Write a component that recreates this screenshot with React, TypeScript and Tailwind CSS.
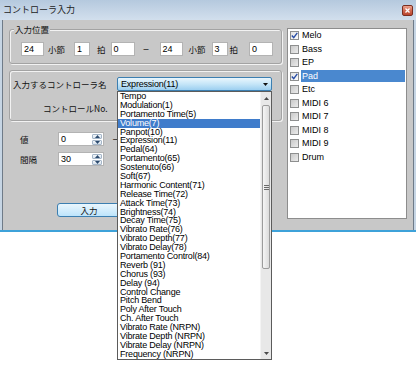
import React from "react";

const cjk = "font-['Noto_Sans_CJK_JP',sans-serif]";
const latin = "font-['Liberation_Sans',Arial,sans-serif]";

const controllers = [
  "Tempo",
  "Modulation(1)",
  "Portamento Time(5)",
  "Volume(7)",
  "Panpot(10)",
  "Expression(11)",
  "Pedal(64)",
  "Portamento(65)",
  "Sostenuto(66)",
  "Soft(67)",
  "Harmonic Content(71)",
  "Release Time(72)",
  "Attack Time(73)",
  "Brightness(74)",
  "Decay Time(75)",
  "Vibrato Rate(76)",
  "Vibrato Depth(77)",
  "Vibrato Delay(78)",
  "Portamento Control(84)",
  "Reverb (91)",
  "Chorus (93)",
  "Delay (94)",
  "Control Change",
  "Pitch Bend",
  "Poly After Touch",
  "Ch. After Touch",
  "Vibrato Rate (NRPN)",
  "Vibrate Depth (NRPN)",
  "Vibrate Delay (NRPN)",
  "Frequency (NRPN)",
];

const tracks = [
  { name: "Melo", checked: true },
  { name: "Bass", checked: false },
  { name: "EP", checked: false },
  { name: "Pad", checked: true, selected: true },
  { name: "Etc", checked: false },
  { name: "MIDI 6", checked: false },
  { name: "MIDI 7", checked: false },
  { name: "MIDI 8", checked: false },
  { name: "MIDI 9", checked: false },
  { name: "Drum", checked: false },
];

function NumBox({ value, width, className = "" }: { value: string; width: string; className?: string }) {
  return (
    <div
      className={`${width} ${className} h-[14px] shrink-0 border border-[#b3b3b3] bg-white pl-[2px] text-[9px] leading-[12px] text-black ${latin}`}
    >
      {value}
    </div>
  );
}

function Label({ text, className = "" }: { text: string; className?: string }) {
  return <span className={`${cjk} ${className} shrink-0 text-[8.5px] leading-[10px] text-[#111]`}>{text}</span>;
}

function Tri({ up, color = "#3a3a3a" }: { up?: boolean; color?: string }) {
  return (
    <svg width="5" height="3" viewBox="0 0 5 3">
      <path d={up ? "M2.5 0 L5 3 L0 3 Z" : "M0 0 L5 0 L2.5 3 Z"} fill={color} />
    </svg>
  );
}

function Spin({ value }: { value: string }) {
  return (
    <div className="flex h-[14px] w-[46px] shrink-0 border border-[#b3b3b3] bg-white">
      <div className={`flex-1 pl-[2px] text-[9px] leading-[12px] text-black ${latin}`}>{value}</div>
      <div className="flex w-[12px] flex-col gap-px p-px">
        <div className="flex flex-1 items-center justify-center rounded-[1px] border border-[#a5b6c8] bg-linear-to-b from-[#f4f7fa] to-[#d8e3ee]">
          <Tri up color="#2c4a6e" />
        </div>
        <div className="flex flex-1 items-center justify-center rounded-[1px] border border-[#a5b6c8] bg-linear-to-b from-[#f4f7fa] to-[#d8e3ee]">
          <Tri color="#2c4a6e" />
        </div>
      </div>
    </div>
  );
}

function Check({ checked }: { checked: boolean }) {
  return (
    <div
      className={`flex h-[9px] w-[9px] shrink-0 items-center justify-center border border-[#8e8f8f] ${
        checked ? "bg-linear-to-br from-[#e4e4e4] to-[#fbfbfb]" : "bg-linear-to-br from-[#c9c9c9] to-[#ececec]"
      }`}
    >
      {checked && (
        <svg width="7" height="7" viewBox="0 0 7 7">
          <path d="M0.8 3.6 L2.7 5.6 L6.3 0.9" fill="none" stroke="#2a4ea6" strokeWidth="1.4" />
        </svg>
      )}
    </div>
  );
}

function ComboList() {
  return (
    <div className="absolute left-0 top-full z-10 flex h-[269px] w-[155px] border border-[#5b5b5b] bg-white">
      <div className="flex flex-1 flex-col">
        {controllers.map((c, i) => (
          <div
            key={c}
            className={`h-[8.9px] whitespace-nowrap pl-[2px] text-[9px] leading-[8.9px] tracking-[-0.2px] ${latin} ${
              i === 3 ? "bg-[#3f7ccb] text-white" : "text-black"
            }`}
          >
            {c}
          </div>
        ))}
      </div>
      <div className="flex w-[11px] flex-col border-l border-[#f4f4f4] bg-[#e8e8e8]">
        <div className="flex h-[12px] items-center justify-center">
          <Tri up color="#4a4a4a" />
        </div>
        <div className="mx-px mt-px flex h-[164px] flex-col items-center justify-center gap-px rounded-[2px] border border-[#9c9c9c] bg-linear-to-r from-[#f6f6f6] to-[#dcdcdc]">
          <div className="h-px w-[5px] bg-[#6a6a6a]" />
          <div className="h-px w-[5px] bg-[#6a6a6a]" />
          <div className="h-px w-[5px] bg-[#6a6a6a]" />
        </div>
        <div className="flex-1" />
        <div className="flex h-[12px] items-center justify-center">
          <Tri color="#4a4a4a" />
        </div>
      </div>
    </div>
  );
}

export default function App() {
  return (
    <div className="min-h-[366px] bg-white">
      {/* Window */}
      <div className="flex h-[232px] w-[416px] flex-col border-b-2 border-[#3ea2d9] bg-[#c6d5e4]">
        {/* Title bar */}
        <div className="flex h-[20px] shrink-0 items-center justify-between bg-linear-to-b from-[#b5c9de] to-[#d2dfed] pl-[3px] pr-[3px]">
          <span className={`${cjk} text-[9px] leading-[10px] text-[#1c1c1c]`}>コントローラ入力</span>
          <div className="flex h-[11px] w-[11px] items-center justify-center rounded-[2px] border border-[#7a2e20] bg-linear-to-b from-[#eca38f] via-[#d16a52] to-[#b9432c]">
            <svg width="5" height="5" viewBox="0 0 5 5">
              <path d="M0.5 0.5 L4.5 4.5 M4.5 0.5 L0.5 4.5" stroke="#fff" strokeWidth="1.3" />
            </svg>
          </div>
        </div>

        {/* Client area */}
        <div className="mx-[2px] flex flex-1 border-x border-[#6f7b88] bg-[#c8c8c8] px-[6px]">
          {/* Left column */}
          <div className="flex w-[273px] shrink-0 flex-col pt-[9px]">
            {/* 入力位置 */}
            <div className="relative flex h-[35px] items-center rounded-[3px] border border-[#a3a3a3] shadow-[inset_1px_1px_0_#f2f2f2,1px_1px_0_#f2f2f2]">
              <span className={`${cjk} absolute left-[4px] top-[-6px] bg-[#c8c8c8] px-[1px] text-[8.5px] leading-[10px] text-[#111]`}>
                入力位置
              </span>
              <div className="mt-[5px] flex items-center">
                <NumBox value="24" width="w-[23px]" className="ml-[11px]" />
                <Label text="小節" className="ml-[4px]" />
                <NumBox value="1" width="w-[16px]" className="ml-[9px]" />
                <Label text="拍" className="ml-[7px]" />
                <NumBox value="0" width="w-[24px]" className="ml-[5px]" />
                <span className={`${latin} ml-[9px] w-[7px] text-[9px] leading-[10px] text-black`}>–</span>
                <NumBox value="24" width="w-[23px]" className="ml-[9px]" />
                <Label text="小節" className="ml-[6px]" />
                <NumBox value="3" width="w-[16px]" className="ml-[6px]" />
                <Label text="拍" className="ml-[2px]" />
                <NumBox value="0" width="w-[24px]" className="ml-[11px]" />
              </div>
            </div>

            {/* 入力するコントローラ名 */}
            <div className="mt-[6px] flex h-[51px] flex-col rounded-[3px] border border-[#a3a3a3] pl-[3px] pr-[9px] pt-[6px] shadow-[inset_1px_1px_0_#f2f2f2,1px_1px_0_#f2f2f2]">
              <div className="flex items-center">
                <Label text="入力するコントローラ名" />
                <div className="relative ml-auto h-[14px] w-[155px]">
                  <div className="flex h-full items-center justify-between rounded-[2px] border border-[#3c7fb1] bg-linear-to-b from-[#eaf6fd] via-[#c6e6f8] to-[#9ccff0] pl-[3px] pr-[3px]">
                    <span className={`${latin} text-[9px] leading-[10px] tracking-[-0.2px] text-black`}>Expression(11)</span>
                    <Tri color="#111" />
                  </div>
                  <ComboList />
                </div>
              </div>
              <Label text="コントロールNo." className="ml-[30px] mt-[12px]" />
            </div>

            {/* 値 */}
            <div className="mt-[11px] flex items-center">
              <Label text="値" className="ml-[11px] w-[38px]" />
              <Spin value="0" />
              <span className={`${latin} ml-[9px] text-[9px] leading-[10px] text-black`}>–</span>
            </div>

            {/* 間隔 */}
            <div className="mt-[6px] flex items-center">
              <Label text="間隔" className="ml-[11px] w-[38px]" />
              <Spin value="30" />
            </div>

            {/* 入力 */}
            <div className="ml-[48px] mt-[37px] flex h-[14px] w-[64px] items-center justify-center rounded-[3px] border border-[#3c7fb1] bg-linear-to-b from-[#eaf6fd] to-[#bde4fb]">
              <Label text="入力" />
            </div>
          </div>

          {/* Track list */}
          <div className="ml-[5px] mt-[8px] flex h-[191px] w-[120px] flex-col border border-[#8d8d8d] bg-white">
            {tracks.map((t) => (
              <div key={t.name} className="flex h-[13.5px] items-center pl-[2px] pr-px">
                <Check checked={t.checked} />
                <span
                  className={`${latin} ml-[2px] flex h-[12px] flex-1 items-center pl-px text-[9px] ${
                    t.selected ? "bg-[#4a88cf] text-white" : "text-black"
                  }`}
                >
                  {t.name}
                </span>
              </div>
            ))}
          </div>
        </div>
      </div>
    </div>
  );
}
